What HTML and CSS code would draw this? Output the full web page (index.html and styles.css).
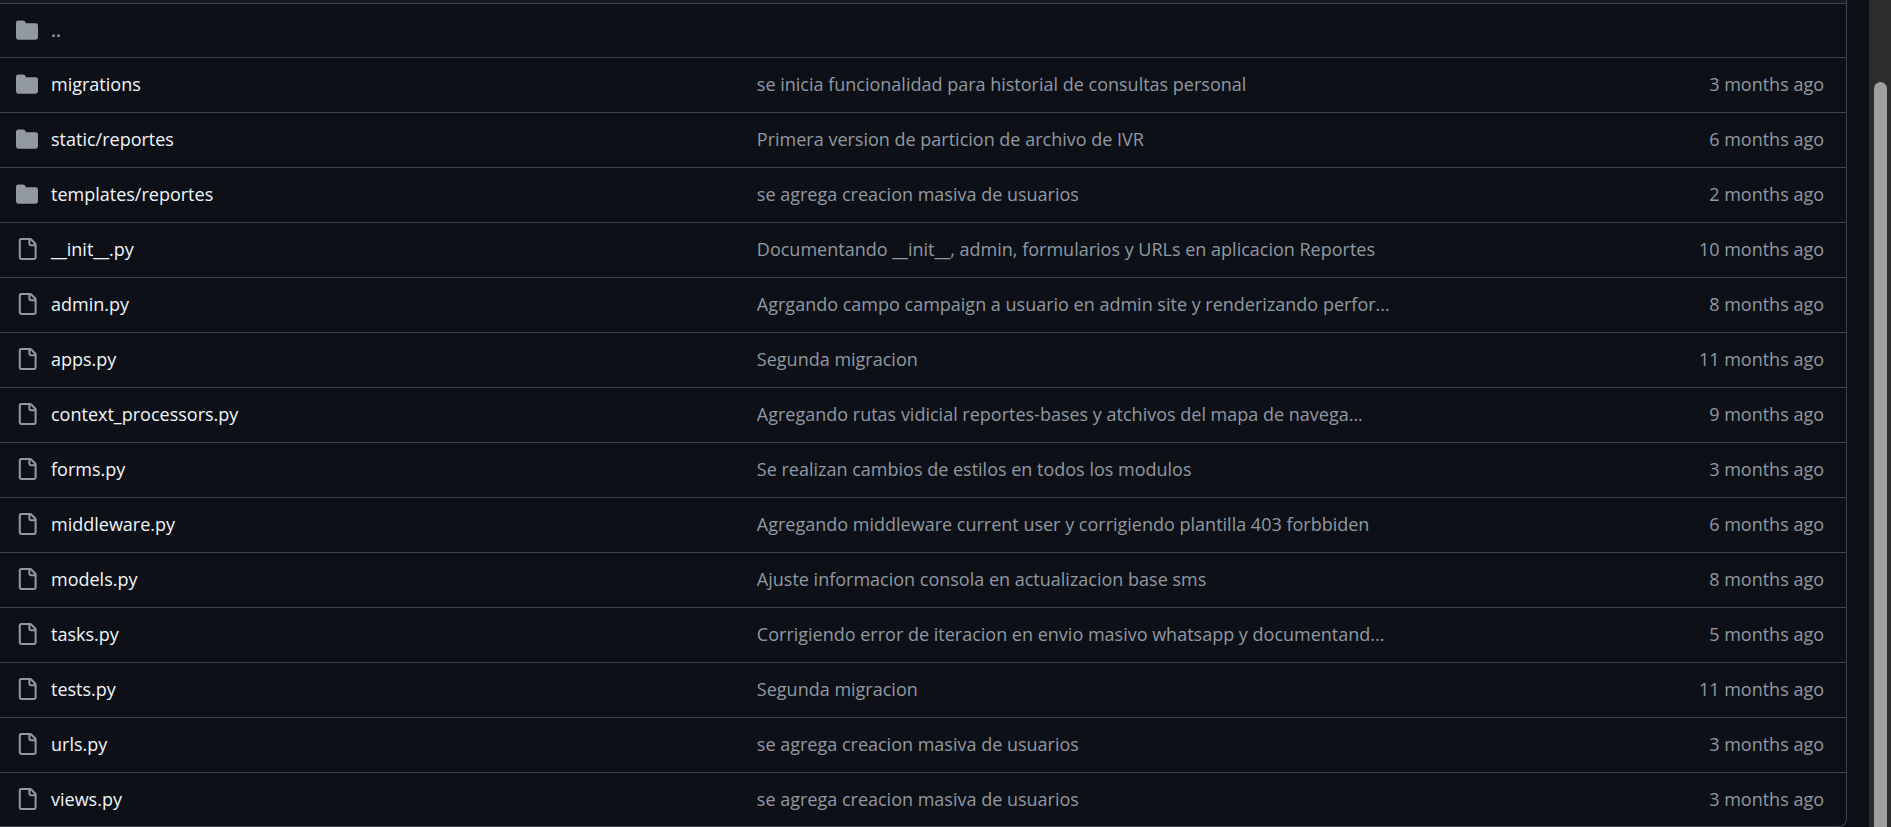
FILE: index.html
```html
<!DOCTYPE html>
<html lang="es">
<head>
    <meta charset="UTF-8">
    <meta name="viewport" content="width=device-width, initial-scale=1.0">
    <title>reportes</title>
    <link rel="stylesheet" href="styles.css">
</head>
<body>
    <svg class="sprite" aria-hidden="true">
        <symbol id="folder" viewBox="0 0 16 16">
            <path d="M1.75 1A1.75 1.75 0 0 0 0 2.75v10.5C0 14.216.784 15 1.75 15h12.5A1.75 1.75 0 0 0 16 13.25v-8.5A1.75 1.75 0 0 0 14.25 3H7.5a.25.25 0 0 1-.2-.1l-.9-1.2C6.07 1.26 5.55 1 5 1H1.75Z"/>
        </symbol>
        <symbol id="file" viewBox="0 0 16 16">
            <path d="M2 1.75C2 .784 2.784 0 3.75 0h6.586c.464 0 .909.184 1.237.513l2.914 2.914c.329.328.513.773.513 1.237v9.586A1.75 1.75 0 0 1 13.25 16h-9.5A1.75 1.75 0 0 1 2 14.25Zm1.75-.25a.25.25 0 0 0-.25.25v12.5c0 .138.112.25.25.25h9.5a.25.25 0 0 0 .25-.25V6h-2.75A1.75 1.75 0 0 1 9 4.25V1.5Zm6.75.062V4.25c0 .138.112.25.25.25h2.688l-.011-.013-2.914-2.914-.013-.011Z"/>
        </symbol>
    </svg>
    <div class="page">
        <main class="content">
            <div class="file-box">
                <div class="file-header"></div>
                <table class="file-table">
                    <colgroup>
                        <col class="col-name">
                        <col class="col-message">
                        <col class="col-age">
                    </colgroup>
                    <tbody>
                        <tr>
                            <td class="name" colspan="3"><div class="entry"><svg class="icon"><use href="#folder"/></svg><a href="#" class="parent">..</a></div></td>
                        </tr>
                        <tr>
                            <td class="name"><div class="entry"><svg class="icon"><use href="#folder"/></svg><a href="#">migrations</a></div></td>
                            <td class="message"><a href="#">se inicia funcionalidad para historial de consultas personal</a></td>
                            <td class="age">3 months ago</td>
                        </tr>
                        <tr>
                            <td class="name"><div class="entry"><svg class="icon"><use href="#folder"/></svg><a href="#">static/reportes</a></div></td>
                            <td class="message"><a href="#">Primera version de particion de archivo de IVR</a></td>
                            <td class="age">6 months ago</td>
                        </tr>
                        <tr>
                            <td class="name"><div class="entry"><svg class="icon"><use href="#folder"/></svg><a href="#">templates/reportes</a></div></td>
                            <td class="message"><a href="#">se agrega creacion masiva de usuarios</a></td>
                            <td class="age">2 months ago</td>
                        </tr>
                        <tr>
                            <td class="name"><div class="entry"><svg class="icon"><use href="#file"/></svg><a href="#">__init__.py</a></div></td>
                            <td class="message"><a href="#">Documentando __init__, admin, formularios y URLs en aplicacion Reportes</a></td>
                            <td class="age">10 months ago</td>
                        </tr>
                        <tr>
                            <td class="name"><div class="entry"><svg class="icon"><use href="#file"/></svg><a href="#">admin.py</a></div></td>
                            <td class="message"><a href="#">Agrgando campo campaign a usuario en admin site y renderizando perfor...</a></td>
                            <td class="age">8 months ago</td>
                        </tr>
                        <tr>
                            <td class="name"><div class="entry"><svg class="icon"><use href="#file"/></svg><a href="#">apps.py</a></div></td>
                            <td class="message"><a href="#">Segunda migracion</a></td>
                            <td class="age">11 months ago</td>
                        </tr>
                        <tr>
                            <td class="name"><div class="entry"><svg class="icon"><use href="#file"/></svg><a href="#">context_processors.py</a></div></td>
                            <td class="message"><a href="#">Agregando rutas vidicial reportes-bases y atchivos del mapa de navega...</a></td>
                            <td class="age">9 months ago</td>
                        </tr>
                        <tr>
                            <td class="name"><div class="entry"><svg class="icon"><use href="#file"/></svg><a href="#">forms.py</a></div></td>
                            <td class="message"><a href="#">Se realizan cambios de estilos en todos los modulos</a></td>
                            <td class="age">3 months ago</td>
                        </tr>
                        <tr>
                            <td class="name"><div class="entry"><svg class="icon"><use href="#file"/></svg><a href="#">middleware.py</a></div></td>
                            <td class="message"><a href="#">Agregando middleware current user y corrigiendo plantilla 403 forbbiden</a></td>
                            <td class="age">6 months ago</td>
                        </tr>
                        <tr>
                            <td class="name"><div class="entry"><svg class="icon"><use href="#file"/></svg><a href="#">models.py</a></div></td>
                            <td class="message"><a href="#">Ajuste informacion consola en actualizacion base sms</a></td>
                            <td class="age">8 months ago</td>
                        </tr>
                        <tr>
                            <td class="name"><div class="entry"><svg class="icon"><use href="#file"/></svg><a href="#">tasks.py</a></div></td>
                            <td class="message"><a href="#">Corrigiendo error de iteracion en envio masivo whatsapp y documentand...</a></td>
                            <td class="age">5 months ago</td>
                        </tr>
                        <tr>
                            <td class="name"><div class="entry"><svg class="icon"><use href="#file"/></svg><a href="#">tests.py</a></div></td>
                            <td class="message"><a href="#">Segunda migracion</a></td>
                            <td class="age">11 months ago</td>
                        </tr>
                        <tr>
                            <td class="name"><div class="entry"><svg class="icon"><use href="#file"/></svg><a href="#">urls.py</a></div></td>
                            <td class="message"><a href="#">se agrega creacion masiva de usuarios</a></td>
                            <td class="age">3 months ago</td>
                        </tr>
                        <tr>
                            <td class="name"><div class="entry"><svg class="icon"><use href="#file"/></svg><a href="#">views.py</a></div></td>
                            <td class="message"><a href="#">se agrega creacion masiva de usuarios</a></td>
                            <td class="age">3 months ago</td>
                        </tr>
                    </tbody>
                </table>
            </div>
        </main>
        <div class="scrollbar">
            <div class="scrollbar-thumb"></div>
        </div>
    </div>
</body>
</html>
```
FILE: styles.css
```css
* {
    margin: 0;
    padding: 0;
    box-sizing: border-box;
}

:root {
    --bg: #0d1117;
    --header: #151b23;
    --border: #3d444d;
    --text: #f0f6fc;
    --muted: #9198a1;
}

body {
    font-family: 'Segoe UI', 'Open Sans', 'Noto Sans', sans-serif;
    font-size: 18px;
    line-height: 28px;
    background: var(--bg);
    color: var(--muted);
}

a {
    color: inherit;
    text-decoration: none;
}

a:hover {
    text-decoration: underline;
}

.sprite {
    display: none;
}

.page {
    display: flex;
    min-height: 100vh;
}

.content {
    flex: 1;
    min-width: 0;
    padding-right: 22px;
}

.file-box {
    border: 1px solid var(--border);
    border-width: 0 1px 1px 0;
    border-radius: 0 0 8px 0;
    overflow: hidden;
}

.file-header {
    height: 3px;
    background: var(--header);
}

.file-table {
    width: 100%;
    table-layout: fixed;
    border-collapse: separate;
    border-spacing: 0;
}

.col-name {
    width: 41%;
}

.col-age {
    width: 200px;
}

.file-table td {
    height: 55px;
    padding-bottom: 2px;
    border-top: 1px solid var(--border);
    white-space: nowrap;
}

.file-table tr:first-child td,
.file-table tr:last-child td {
    height: 54px;
}

.file-table .name {
    padding-left: 16px;
    color: var(--text);
}

.entry {
    display: flex;
    align-items: center;
    gap: 13px;
}

.file-table .parent {
    color: var(--muted);
    font-weight: 600;
}

.icon {
    width: 22px;
    height: 22px;
    fill: var(--muted);
}

.file-table .message {
    overflow: hidden;
    text-overflow: ellipsis;
}

.file-table .age {
    padding-right: 22px;
    text-align: right;
}

.scrollbar {
    display: flex;
    width: 22px;
    padding: 82px 4px 0 5px;
    background: #2c2c2c;
}

.scrollbar-thumb {
    flex: 1;
    background: #9f9f9f;
    border-radius: 7px 7px 0 0;
}
```
